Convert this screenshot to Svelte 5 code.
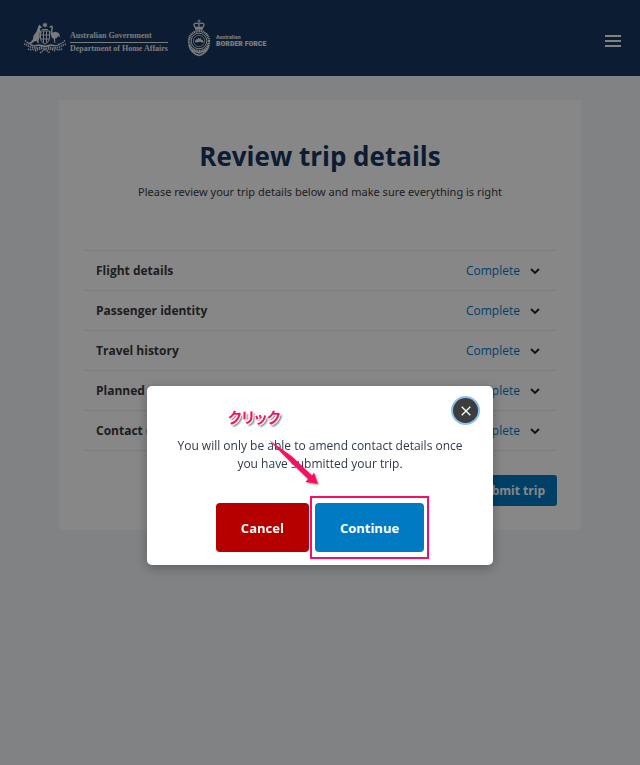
<script lang="ts">
  const sections = [
    "Flight details",
    "Passenger identity",
    "Travel history",
    "Planned stay",
    "Contact details",
  ];

  let open = $state<string | null>(null);
  let showConfirm = $state(true);

  function toggle(name: string) {
    open = open === name ? null : name;
  }
</script>

<header>
  <a class="brand" href="#home">
    <!-- coat of arms: kangaroo, shield, emu, star and wattle -->
    <svg class="arms" viewBox="0 0 44 34" aria-hidden="true">
      <g fill="currentColor">
        <path d="M22 1l.8 1.7 1.9-.3-1 1.6 1 1.5-1.9-.2L22 7l-.8-1.7-1.9.2 1-1.5-1-1.6 1.9.3z" />
        <path d="M16.8 3.5l.8 1.5 1.1 1-.3 1-1.3.3.2 3.2 1.7 1.2-.3.9-2-.8.1 4.5-1.4 3.5.6 2-1.5.2-.7-2-2.6.4-2.8 2-3 .3-1.6-.6 3.6-.8 2.4-2.7.8-4.2 2.6-3.3 1.5-3.8.6-2.3z" />
        <path d="M26.5 5.2l2-.8 1.2.9.3 1.6-.7 3 .5 1.5 3.2-.7 3 1.6 1.4 4-2-1.2-1.6 1.8-1.8.5.3 4.5-.9.3-.7-4.5-1.6-.6-1.4-3.3-.1-3 1-3.7-.4-.7-1.5.2z" />
        <path d="M5.5 23.3l5 1 6-1 5.5 1.2 6-1.2 5 1 5-1-4 2-5-.3-7 1.2-7-1.2-5.5.4z" />
      </g>
      <path
        d="M17.5 10h9v7c0 3-2.2 5-4.5 6-2.3-1-4.5-3-4.5-6zM17.5 14h9M20.5 10v11.5M23.5 10v11.5M18 18h8M19 8.5h6"
        fill="none" stroke="currentColor" stroke-width="1"
      />
      <g fill="none" stroke="currentColor" stroke-width="1.6" stroke-dasharray="1.4 .8">
        <path d="M2 19.5c2 2 4 4 8 4M1 23c4 1 6 5 13 3M5 28c4 2 8-1 15-2" />
        <path d="M42 19.5c-2 2-4 4-8 4M43 23c-4 1-6 5-13 3M39 28c-4 2-8-1-15-2" />
        <path d="M12 30c3-2 6-2 10-3 4 1 7 1 10 3M17 32l5-4 5 4" />
      </g>
    </svg>
    <span class="department">
      <span>Australian Government</span>
      <span>Department of Home Affairs</span>
    </span>
  </a>
  <a class="brand force" href="#border-force">
    <svg class="crest" viewBox="0 0 24 38" aria-hidden="true">
      <g fill="none" stroke="currentColor">
        <path d="M8.5 8.5C5 5.2 8 2.8 12 5c4-2.2 7 .2 3.5 3.5zM12 4.5v4M8 10h8" stroke-width="1.3" />
        <path d="M12 .5v3.5M10.5 2h3" stroke-width="1" />
        <circle cx="12" cy="22" r="10" stroke-width="2.4" stroke-dasharray="1.3 .5" />
        <circle cx="12" cy="22" r="7.8" stroke-width="1" />
        <circle cx="12" cy="22" r="5.6" stroke-width=".7" />
        <path d="M2 26c1 5 5 9 10 10.5C17 35 21 31 22 26M5 31l7 3 7-3" stroke-width="1.5" />
      </g>
      <path d="M7.5 23l1.5-2.5 1.5-.2.5-1.3 1.5.8.8-1.3.7 2 1.8.8.8 1.7-1.6.7-1.5-1-2 .2-1.5.6z" fill="currentColor" />
    </svg>
    <span class="force-name">
      <small>Australian</small>
      <strong>BORDER FORCE</strong>
    </span>
  </a>
  <button class="menu" aria-label="Menu">
    <span></span><span></span><span></span>
  </button>
</header>

<main>
  <h1>Review trip details</h1>
  <p class="intro">Please review your trip details below and make sure everything is right</p>

  <div class="sections">
    {#each sections as name (name)}
      <button class="section" aria-expanded={open === name} onclick={() => toggle(name)}>
        <span class="name">{name}</span>
        <span class="status">Complete</span>
        <svg class="chevron" viewBox="0 0 10 6" aria-hidden="true">
          <path d="M1 1l4 4 4-4" fill="none" stroke="currentColor" stroke-width="1.8" />
        </svg>
      </button>
    {/each}
  </div>

  <div class="actions">
    <button class="submit" onclick={() => (showConfirm = true)}>Submit trip</button>
  </div>
</main>

{#if showConfirm}
  <div class="overlay">
    <div class="modal" role="dialog" aria-modal="true" aria-labelledby="confirm-text">
      <button class="close" aria-label="Close" onclick={() => (showConfirm = false)}>
        <svg viewBox="0 0 10 10" aria-hidden="true">
          <path d="M.7.7l8.6 8.6M9.3.7L.7 9.3" fill="none" stroke="currentColor" stroke-width="1.3" />
        </svg>
      </button>
      <p id="confirm-text">
        You will only be able to amend contact details once you have submitted your trip.
      </p>
      <div class="choices">
        <button class="cancel" onclick={() => (showConfirm = false)}>Cancel</button>
        <div class="marked">
          <button class="continue" onclick={() => (showConfirm = false)}>Continue</button>
        </div>
      </div>
      <span class="hint" lang="ja">クリック</span>
      <svg class="arrow" viewBox="0 0 54 48" aria-hidden="true">
        <path d="M1 0L24 16.500 44 35.500l2-3L50 44l-12.500-2 2.500-3L21 20.500z" fill="#f90f62" />
      </svg>
    </div>
  </div>
{/if}

<style>
  :global(body) {
    background: #f3f6f9;
    color: #3a3a3a;
    font-family: "Open Sans", "Noto Sans", sans-serif;
    font-size: 12px;
  }
  button {
    border: 0;
    padding: 0;
    font: inherit;
    color: inherit;
    background: none;
    cursor: pointer;
  }
  header {
    display: flex;
    align-items: center;
    height: 76px;
    padding: 0 17px 0 23px;
    box-sizing: border-box;
    background: #17355f;
    color: #fff;
  }
  .brand {
    display: flex;
    align-items: center;
    gap: 3px;
    color: #e6e6e6;
    text-decoration: none;
  }
  .arms {
    width: 44px;
    height: 34px;
  }
  .department {
    display: flex;
    flex-direction: column;
    margin-top: 8px;
    font: bold 8px/12px "Liberation Serif", serif;
  }
  .department span:first-child {
    border-bottom: 1px solid;
  }
  .force {
    margin-left: 19px;
    gap: 5px;
  }
  .crest {
    width: 24px;
    height: 38px;
  }
  .force-name {
    display: flex;
    flex-direction: column;
    margin-top: 4px;
    font-family: "Roboto Condensed", Roboto, sans-serif;
    font-weight: bold;
  }
  .force-name small {
    font-size: 6px;
    line-height: 7px;
  }
  .force-name strong {
    font-size: 8px;
    line-height: 8px;
  }
  .menu {
    display: flex;
    flex-direction: column;
    gap: 3px;
    margin: 6px 0 0 auto;
    padding: 2px;
  }
  .menu span {
    width: 16px;
    height: 2px;
    background: #f4f4f4;
  }

  main {
    max-width: 522px;
    margin: 24px auto;
    padding: 36px 24px 24px;
    box-sizing: border-box;
    background: #fff;
  }
  h1 {
    margin: 0;
    color: #17355f;
    font-size: 26px;
    line-height: 40px;
    text-align: center;
  }
  .intro {
    margin: 6px 0 48px;
    font-family: "Noto Sans", sans-serif;
    font-size: 11px;
    line-height: 20px;
    text-align: center;
  }
  .sections {
    border-top: 1px solid #eceef0;
  }
  .section {
    display: flex;
    align-items: center;
    width: 100%;
    height: 40px;
    padding: 0 17px 0 13px;
    border-bottom: 1px solid #eceef0;
  }
  .name {
    flex: 1;
    font-weight: bold;
    text-align: left;
  }
  .status {
    color: #007ac3;
  }
  .chevron {
    width: 10px;
    height: 6px;
    margin-left: 10px;
    color: #222;
  }
  .actions {
    display: flex;
    justify-content: flex-end;
    margin-top: 24px;
  }
  .submit {
    height: 31px;
    padding: 0 12px;
    border-radius: 3px;
    background: #007ac3;
    color: #fff;
    font-weight: bold;
  }

  .overlay {
    position: fixed;
    inset: 0;
    display: flex;
    justify-content: center;
    align-items: flex-start;
    padding: 386px 16px 0;
    background: rgba(0, 0, 0, 0.47);
  }
  .modal {
    position: relative;
    max-width: 346px;
    padding: 51px 28px 13px;
    box-sizing: border-box;
    border-radius: 5px;
    background: #fff;
    box-shadow: 0 3px 12px rgba(0, 0, 0, 0.3);
  }
  .modal p {
    margin: 0 0 30px;
    color: #2f3a48;
    line-height: 18px;
    text-align: center;
  }
  .close {
    position: absolute;
    top: 12px;
    right: 15px;
    display: grid;
    place-items: center;
    width: 25px;
    height: 25px;
    border-radius: 50%;
    background: #3d3d3d;
    color: #fff;
    box-shadow: 0 0 0 2px #8cc2f2;
  }
  .close svg {
    width: 10px;
    height: 10px;
  }
  .choices {
    display: flex;
    justify-content: center;
    gap: 6px;
  }
  .choices button {
    height: 49px;
    padding: 0 25px;
    border-radius: 4px;
    color: #fff;
    font-size: 13px;
    font-weight: bold;
  }
  .choices .cancel {
    background: #b60000;
  }
  .choices .continue {
    background: #007ac3;
  }
  .marked {
    position: relative;
  }
  .marked::after {
    content: "";
    position: absolute;
    inset: -7px -5px;
    border: 2px solid #f90f62;
    pointer-events: none;
  }
  .hint {
    position: absolute;
    top: 19px;
    left: 81px;
    color: #f90f62;
    font: bold 15px/24px "Noto Sans CJK JP", sans-serif;
    font-feature-settings: "palt";
    text-shadow:
      -1px -1px 0 #fff,
      1px 1px 0 #fff,
      2px 2px 2px rgba(0, 0, 0, 0.6);
  }
  .arrow {
    position: absolute;
    top: 54px;
    left: 121px;
    width: 54px;
    height: 48px;
    filter: drop-shadow(1px 1px 1px rgba(0, 0, 0, 0.4));
    pointer-events: none;
  }
</style>
